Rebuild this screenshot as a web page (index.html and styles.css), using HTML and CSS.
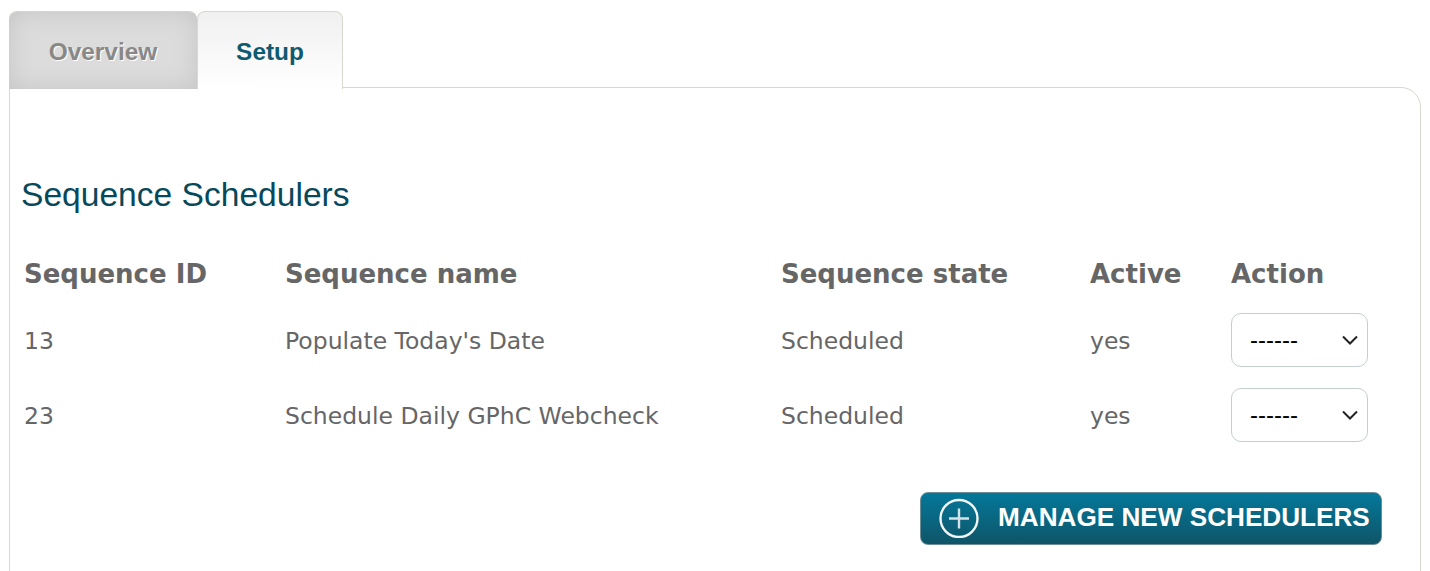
FILE: index.html
```html
<!DOCTYPE html>
<html lang="en">
<head>
  <meta charset="UTF-8" />
  <meta name="viewport" content="width=device-width, initial-scale=1.0"/>
  <title>Sequence Schedulers</title>
  <link rel="stylesheet" href="styles.css">
</head>
<body>
  <div class="tabs">
    <a class="tab tab-off">Overview</a>
    <a class="tab tab-on">Setup</a>
  </div>

  <div class="panel">
    <h2>Sequence Schedulers</h2>

    <table class="seq-table">
      <thead>
        <tr>
          <th class="col-id">Sequence ID</th>
          <th class="col-name">Sequence name</th>
          <th class="col-state">Sequence state</th>
          <th class="col-active">Active</th>
          <th>Action</th>
        </tr>
      </thead>
      <tbody>
        <tr>
          <td>13</td>
          <td>Populate Today's Date</td>
          <td>Scheduled</td>
          <td>yes</td>
          <td><select class="action"><option>------</option></select></td>
        </tr>
        <tr>
          <td>23</td>
          <td>Schedule Daily GPhC Webcheck</td>
          <td>Scheduled</td>
          <td>yes</td>
          <td><select class="action"><option>------</option></select></td>
        </tr>
      </tbody>
    </table>

    <div class="actions">
      <button class="manage">
        <svg class="plus" width="40" height="40" viewBox="0 0 40 40">
          <circle cx="20" cy="20.5" r="18.5" fill="none" stroke="#f2f6f7" stroke-width="2.4"/>
          <path d="M10 20.5H30M20 10.5V30.5" fill="none" stroke="#d5e3e7" stroke-width="2.4"/>
        </svg>
        MANAGE NEW SCHEDULERS
      </button>
    </div>
  </div>
</body>
</html>
```

FILE: styles.css
```css
html, body {
  height: 571px;
  overflow: hidden;
}

body {
  margin: 0;
  padding: 11px 9px 0;
  background: #fff;
  font-family: "DejaVu Sans", Verdana, sans-serif;
  color: #666;
}

.tabs {
  display: flex;
  height: 78px;
  position: relative;
  z-index: 1;
}

.tab {
  display: flex;
  align-items: center;
  justify-content: center;
  box-sizing: border-box;
  padding-top: 2px;
  font-family: "Liberation Sans", Arial, sans-serif;
  font-size: 24.4px;
  font-weight: bold;
  border-radius: 8px 8px 0 0;
}

.tab-off {
  width: 188px;
  color: #888;
  background: #dcdcdc;
  box-shadow: inset 0 0 24px #c4c4c4;
  border-top: 1px solid #d6d5cd;
  text-shadow: 1px 1px 0 #fff;
}

.tab-on {
  width: 146px;
  color: #0f5a70;
  background: linear-gradient(to bottom, #f0f0f0, #fff);
  border: 1px solid #d9d8ce;
  border-bottom: none;
}

.panel {
  box-sizing: border-box;
  height: 600px;
  margin-top: -2px;
  padding: 88px 11px 0;
  background: #fff;
  border: 1px solid #d9d8ce;
  border-radius: 0 20px 0 0;
}

h2 {
  margin: 0;
  font-family: "Liberation Sans", Arial, sans-serif;
  font-size: 33.6px;
  font-weight: normal;
  line-height: 38px;
  color: #07495a;
}

.seq-table {
  margin-top: 27px;
  border-collapse: collapse;
  table-layout: fixed;
  width: 1360px;
  font-size: 23.5px;
}

.seq-table th {
  height: 58px;
  padding: 4px 0 0 3px;
  text-align: left;
  font-size: 26px;
  font-weight: bold;
}

.seq-table td {
  height: 75px;
  padding: 0 0 0 3px;
}

.col-id { width: 258px; }
.col-name { width: 493px; }
.col-state { width: 306px; }
.col-active { width: 138px; }

.action {
  display: block;
  width: 137px;
  height: 54px;
  margin-bottom: 2px;
  box-sizing: border-box;
  padding-left: 18px;
  appearance: none;
  background: #fff url("data:image/svg+xml,%3Csvg xmlns='http://www.w3.org/2000/svg' width='16' height='10' viewBox='0 0 16 10'%3E%3Cpath d='M1 1.5l7 7 7-7' fill='none' stroke='%23222' stroke-width='2'/%3E%3C/svg%3E") no-repeat right 9px center;
  border: 1px solid #c3cfcf;
  border-radius: 10px;
  font-family: "Liberation Sans", Arial, sans-serif;
  font-size: 24px;
  color: #000;
}

.actions {
  display: flex;
  justify-content: flex-end;
  padding: 39px 27px 0 0;
}

.manage {
  display: flex;
  align-items: center;
  gap: 19px;
  width: 462px;
  height: 53px;
  box-sizing: border-box;
  padding: 0 0 2px 18px;
  border: 1px solid #6f8d96;
  border-radius: 8px;
  background: linear-gradient(to bottom, #04789a, #0f5568);
  color: #fff;
  font-family: "Liberation Sans", Arial, sans-serif;
  font-size: 26.15px;
  font-weight: bold;
  white-space: nowrap;
}

.plus {
  flex: none;
}
```
